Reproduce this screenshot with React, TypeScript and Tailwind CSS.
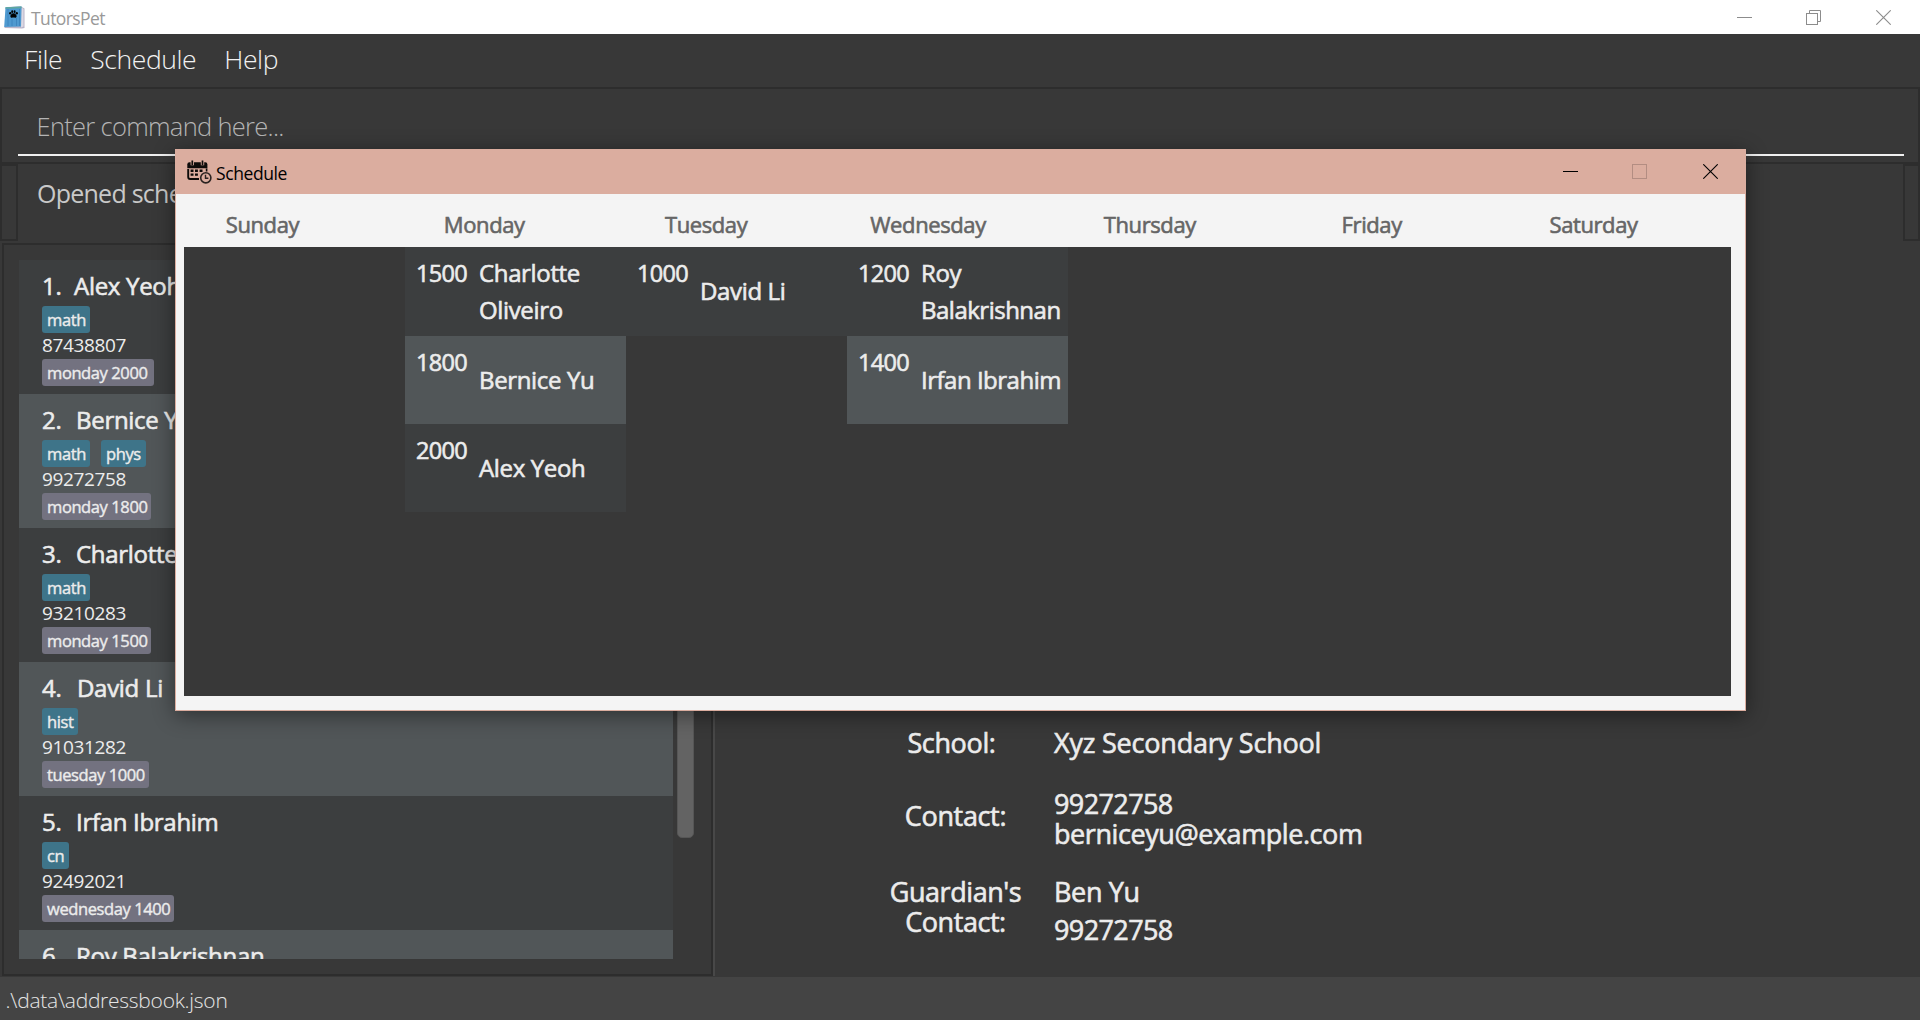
import type { ReactNode } from "react";

type Person = {
  index: number;
  name: string;
  numberWidth: string;
  subjects: { label: string; width: string }[];
  phone: string;
  lesson: { label: string; width: string };
};

const people: Person[] = [
  { index: 1, name: "Alex Yeoh", numberWidth: "w-8", subjects: [{ label: "math", width: "w-12" }], phone: "87438807", lesson: { label: "monday 2000", width: "w-28" } },
  { index: 2, name: "Bernice Yu", numberWidth: "w-[34px]", subjects: [{ label: "math", width: "w-12" }, { label: "phys", width: "w-[45px]" }], phone: "99272758", lesson: { label: "monday 1800", width: "w-[109px]" } },
  { index: 3, name: "Charlotte Oliveiro", numberWidth: "w-[34px]", subjects: [{ label: "math", width: "w-12" }], phone: "93210283", lesson: { label: "monday 1500", width: "w-[109px]" } },
  { index: 4, name: "David Li", numberWidth: "w-[35px]", subjects: [{ label: "hist", width: "w-9" }], phone: "91031282", lesson: { label: "tuesday 1000", width: "w-[107px]" } },
  { index: 5, name: "Irfan Ibrahim", numberWidth: "w-[34px]", subjects: [{ label: "cn", width: "w-[27px]" }], phone: "92492021", lesson: { label: "wednesday 1400", width: "w-[132px]" } },
  { index: 6, name: "Roy Balakrishnan", numberWidth: "w-[34px]", subjects: [], phone: "", lesson: { label: "", width: "w-[132px]" } },
];

const schedule: { day: string; lessons: { time: string; lines: string[] }[] }[] = [
  { day: "Sunday", lessons: [] },
  {
    day: "Monday",
    lessons: [
      { time: "1500", lines: ["Charlotte", "Oliveiro"] },
      { time: "1800", lines: ["Bernice Yu"] },
      { time: "2000", lines: ["Alex Yeoh"] },
    ],
  },
  { day: "Tuesday", lessons: [{ time: "1000", lines: ["David Li"] }] },
  {
    day: "Wednesday",
    lessons: [
      { time: "1200", lines: ["Roy", "Balakrishnan"] },
      { time: "1400", lines: ["Irfan Ibrahim"] },
    ],
  },
  { day: "Thursday", lessons: [] },
  { day: "Friday", lessons: [] },
  { day: "Saturday", lessons: [] },
];

function BookIcon() {
  return (
    <svg className="h-[23px] w-[21px]" viewBox="0 0 21 23">
      <path d="M3 1 L17 0.5 L20.5 2.5 L20.5 22 L18 22.5 L0.5 22 Z" fill="#b9b4c8" />
      <path d="M17.5 1.5 L19.5 3 V20.5 L17 21.5 Z" fill="#dcd9e4" />
      <path d="M1.5 1.2 L17.5 0.5 L17 20.5 L0.2 21 Z" fill="#4f9ad0" />
      <path d="M1.5 1.2 L17.5 0.5 L17.4 2.2 L1.4 2.8 Z" fill="#5fa79f" />
      <path d="M4 3 V20 M8 13 V20 M12.5 12 V20 M15.5 3 V20" stroke="#3d83bd" strokeWidth="0.9" />
      <ellipse cx="6.2" cy="7.2" rx="1.1" ry="1.3" />
      <ellipse cx="8.2" cy="5.7" rx="1" ry="1.4" />
      <ellipse cx="10.6" cy="5.7" rx="1" ry="1.4" />
      <ellipse cx="12.8" cy="7.2" rx="1.1" ry="1.3" />
      <path d="M9.5 7.3 C11.3 7.3 13 9.3 12.6 10.8 C12 12.4 10.4 11.6 9.5 11.6 C8.6 11.6 7 12.4 6.4 10.8 C6 9.3 7.7 7.3 9.5 7.3 Z" />
    </svg>
  );
}

function CalendarClockIcon() {
  return (
    <svg className="h-6 w-[25px]" viewBox="0 0 25 24" fill="none">
      <path d="M1.2 9 V17 Q1.2 19 3.2 19 H12" stroke="#0d0b0a" strokeWidth="1.9" />
      <path d="M19.6 8.5 V11.5" stroke="#0d0b0a" strokeWidth="1.6" />
      <path d="M0.3 8.2 V4.5 Q0.3 2.3 2.5 2.3 H18.3 Q20.4 2.3 20.4 4.5 V8.2 Z" fill="#0d0b0a" />
      <path d="M5.3 0.4 V5.2 M15.5 0.4 V5.2" stroke="#dbad9f" strokeWidth="3.4" />
      <path d="M5.3 0.4 V5 M15.5 0.4 V5" stroke="#0d0b0a" strokeWidth="1.7" />
      <path d="M3.6 9.6 h2.9 v2.4 h-2.9z M8 9.6 h2.9 v2.4 h-2.9z M12.6 9.6 h2.9 v2.4 h-2.9z M3.6 13.4 h2.9 v2.4 h-2.9z M8 13.4 h2.9 v2.4 h-2.9z" fill="#0d0b0a" />
      <circle cx="18.8" cy="17.8" r="5.1" stroke="#2b2321" strokeWidth="1.6" />
      <path d="M18.5 14.8 V18.3 H21.4" stroke="#2b2321" strokeWidth="1.4" />
    </svg>
  );
}

function MinimizeIcon() {
  return (
    <svg className="size-[15px]" viewBox="0 0 15 15" stroke="currentColor">
      <path d="M0 7.5 H15" />
    </svg>
  );
}

function MaximizeIcon() {
  return (
    <svg className="size-[15px]" viewBox="0 0 15 15" fill="none" stroke="currentColor">
      <rect x="0.5" y="0.5" width="14" height="14" />
    </svg>
  );
}

function RestoreIcon() {
  return (
    <svg className="size-[15px]" viewBox="0 0 15 15" fill="none" stroke="currentColor">
      <rect x="0.5" y="3.5" width="11" height="11" />
      <path d="M3.5 3.5 V0.5 H14.5 V11.5 H11.5" />
    </svg>
  );
}

function CloseIcon() {
  return (
    <svg className="size-[15px]" viewBox="0 0 15 15" fill="none" stroke="currentColor" strokeWidth="1.1">
      <path d="M0.3 0.3 L14.7 14.7 M14.7 0.3 L0.3 14.7" />
    </svg>
  );
}

function Tag({ color, width, children }: { color: string; width: string; children: ReactNode }) {
  return (
    <span className={`block h-[27px] shrink-0 rounded-[3px] pl-[5px] text-[16.5px] leading-[27px] font-medium tracking-[-0.4px] whitespace-nowrap [-webkit-text-stroke:0.4px] ${width} ${color}`}>
      {children}
    </span>
  );
}

function PersonCard({ person }: { person: Person }) {
  return (
    <li className="h-[134px] pt-2.5 pl-[23px] text-[#ececec] odd:bg-[#3c3e3f] even:bg-[#515658]">
      <div className="flex h-8 text-[24px] leading-8 font-medium tracking-[-0.3px] whitespace-nowrap [-webkit-text-stroke:0.6px]">
        <span className={person.numberWidth}>{person.index}.</span>
        <span>{person.name}</span>
      </div>
      {person.phone && (
        <>
          <div className="mt-1 flex gap-[11px]">
            {person.subjects.map((s) => (
              <Tag key={s.label} color="bg-[#3e7489]" width={s.width}>
                {s.label}
              </Tag>
            ))}
          </div>
          <div className="h-[26px] text-[19px] leading-[25px] tracking-[-0.35px]">{person.phone}</div>
          <Tag color="bg-[#737280]" width={person.lesson.width}>
            {person.lesson.label}
          </Tag>
        </>
      )}
    </li>
  );
}

function MainWindow() {
  return (
    <div className="flex h-full flex-col">
      <header className="flex h-[34px] shrink-0 items-center bg-white text-[#999]">
        <div className="flex grow items-center pl-1">
          <BookIcon />
          <span className="ml-1.5 pt-px text-[17.5px] leading-6 tracking-[-0.6px]">TutorsPet</span>
        </div>
        <div className="flex gap-[55px] pr-[29px] text-[#8c8c8c]">
          <MinimizeIcon />
          <span className="-mr-px -ml-px pr-px">
            <RestoreIcon />
          </span>
          <CloseIcon />
        </div>
      </header>

      <nav className="flex h-[53px] shrink-0 items-center gap-7 pb-px pl-6 text-[26.5px] font-light tracking-[-0.4px] text-[#f2f2f2]">
        <span>File</span>
        <span>Schedule</span>
        <span>Help</span>
      </nav>

      <section className="h-[77px] shrink-0 border-2 border-[#2d2d2d] pt-[17px] pr-3.5 pl-4">
        <div className="h-[50px] border-b-2 border-[#f0f0f0] pl-[18.5px] text-[25.5px] leading-10 font-light tracking-[-0.7px] text-[#b4b4b4]">
          Enter command here...
        </div>
      </section>

      <section className="flex h-[77px] shrink-0">
        <div className="w-[18px] shrink-0 border-2 border-[#2d2d2d]" />
        <div className="grow pt-3 pl-[19px] text-[25px] leading-[34px] font-normal tracking-[-0.75px] text-[#c9c9c9]">Opened schedule.</div>
        <div className="w-[17px] shrink-0 border-2 border-[#2d2d2d]" />
      </section>

      <main className="flex grow pt-[2px]">
        <section className="ml-0.5 flex h-[733px] w-[711px] shrink-0 border-2 border-[#2d2d2d] pt-[15px] pb-[15px] pl-[15px]">
          <ul className="w-[654px] overflow-hidden">
            {people.map((p) => (
              <PersonCard key={p.index} person={p} />
            ))}
          </ul>
          <div className="ml-1 h-[578px] w-[17px] rounded-[5px] border border-[#565656] bg-[#636363]" />
        </section>
        <div className="h-[733px] w-0.5 bg-[#484848]" />
        <section className="grow pt-[485px] pl-[170px] text-[27px] leading-[30px] font-medium tracking-[-0.35px] text-[#ececec] [-webkit-text-stroke:0.6px]">
          <div className="flex gap-[29px]">
            <div className="w-[140px] pr-[7px] text-center">School:</div>
            <div className="tracking-[-0.2px]">Xyz Secondary School</div>
          </div>
          <div className="mt-[31px] flex gap-[29px]">
            <div className="w-[140px] pt-3 pl-px text-center">Contact:</div>
            <div>
              <div className="tracking-[-0.6px]">99272758</div>
              <div className="tracking-[-0.43px]">berniceyu@example.com</div>
            </div>
          </div>
          <div className="mt-7 flex gap-[29px]">
            <div className="w-[140px] pl-px text-center tracking-[-0.45px]">
              Guardian's
              <br />
              Contact:
            </div>
            <div>
              <div>Ben Yu</div>
              <div className="mt-2 tracking-[-0.6px]">99272758</div>
            </div>
          </div>
        </section>
      </main>

      <footer className="h-[43px] shrink-0 bg-[#444] pl-[5.5px] text-[21px] leading-[46px] font-light tracking-[-0.26px] text-[#e6e6e6]">.\data\addressbook.json</footer>
    </div>
  );
}

function ScheduleWindow() {
  return (
    <div className="absolute top-[149px] left-[175px] flex h-[562px] w-[1571px] flex-col border border-t-0 border-[#dbad9f] bg-[#f4f4f4] shadow-[0_4px_20px_rgba(0,0,0,0.45)]">
      <header className="flex h-[45px] shrink-0 items-center bg-[#dbad9f] text-black">
        <div className="flex grow items-center pl-[11px]">
          <CalendarClockIcon />
          <span className="ml-1 pt-0.5 text-[17.5px] leading-6 tracking-[-0.4px]">Schedule</span>
        </div>
        <div className="flex gap-[54px] pr-[27px]">
          <MinimizeIcon />
          <span className="text-[#b38d82]">
            <MaximizeIcon />
          </span>
          <span className="pl-0.5">
            <CloseIcon />
          </span>
        </div>
      </header>
      <div className="-ml-[24.5px] grid h-[53px] w-[1553px] shrink-0 grid-cols-7 items-center pt-2 text-center text-[22px] font-medium tracking-[-0.4px] text-[#666] [-webkit-text-stroke:0.6px]">
        {schedule.map((d) => (
          <span key={d.day}>{d.day}</span>
        ))}
      </div>
      <div className="ml-2 grid h-[449px] w-[1547px] grid-cols-7 bg-[#383838]">
        {schedule.map((d) => (
          <div key={d.day}>
            {d.lessons.map((l) => (
              <div key={l.time} className="flex h-[88px] text-[24px] font-medium tracking-[-0.35px] text-[#ececec] odd:bg-[#3c3e3f] even:bg-[#515658] [-webkit-text-stroke:0.6px] first:h-[89px]">
                <span className="w-[74px] pt-2.5 pr-px text-center text-[23.5px] leading-8 tracking-[-0.7px]">{l.time}</span>
                <div className="flex flex-col justify-center pb-px leading-[37.5px] whitespace-nowrap">
                  {l.lines.map((line) => (
                    <span key={line} className={line.length > 11 ? "tracking-[-0.5px]" : ""}>
                      {line}
                    </span>
                  ))}
                </div>
              </div>
            ))}
          </div>
        ))}
      </div>
    </div>
  );
}

export default function App() {
  return (
    <div className="relative h-[1020px] w-[1920px] overflow-hidden bg-[#383838] font-['Open_Sans',sans-serif]">
      <MainWindow />
      <ScheduleWindow />
    </div>
  );
}
